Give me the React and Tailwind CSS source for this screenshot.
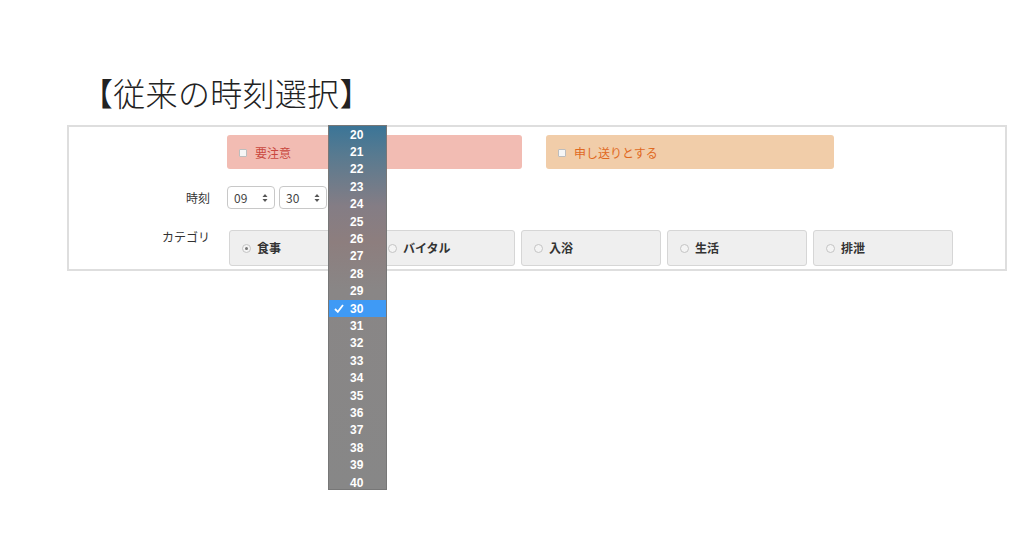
const MINUTES = Array.from({ length: 21 }, (_, i) => String(20 + i))
const CATEGORIES = ['食事', 'バイタル', '入浴', '生活', '排泄']

function Radio({ checked }) {
  return (
    <span className="w-[9px] h-[9px] rounded-full border border-[#c4c4c4] bg-[#f4f4f4] flex items-center justify-center">
      {checked && <span className="w-[3px] h-[3px] rounded-full bg-[#777]" />}
    </span>
  )
}

function Check() {
  return <span className="w-[8px] h-[8px] rounded-[1px] border border-[#bdbdbd] bg-[#f6f6f6]" />
}

function Select({ value }) {
  return (
    <div className="w-[48px] h-[23px] rounded-[4px] border border-[#c8c8c8] bg-white flex items-center justify-between px-[6px] text-[12px] text-[#444]">
      <span>{value}</span>
      <svg width="6" height="10" viewBox="0 0 6 10">
        <path d="M0.5 4 L3 1 L5.5 4 Z" fill="#555" />
        <path d="M0.5 6 L3 9 L5.5 6 Z" fill="#555" />
      </svg>
    </div>
  )
}

export default function App() {
  return (
    <div className="w-[1024px] h-[539px] bg-white relative overflow-hidden" style={{ fontFamily: '"Noto Sans CJK JP", "Noto Sans", sans-serif' }}>
      <div className="pt-[72px] pl-[81px]">
        <h1 className="text-[32px] leading-[40px] font-light text-[#222] tracking-[0.3px]">【従来の時刻選択】</h1>
      </div>

      {/* form panel */}
      <div className="ml-[67px] mt-[13px] w-[940px] h-[146px] border-2 border-[#dedede] pt-[8px]">
        <div className="flex pl-[158px] gap-[24px]">
          <div className="w-[295px] h-[34px] rounded-[3px] bg-[#f2bcb3] flex items-center gap-[8px] pl-[12px] pt-[2px] text-[12px] text-[#c9473e]">
            <Check />
            <span>要注意</span>
          </div>
          <div className="w-[288px] h-[34px] rounded-[3px] bg-[#f1cda9] flex items-center gap-[8px] pl-[12px] pt-[2px] text-[12px] text-[#e0691f]">
            <Check />
            <span>申し送りとする</span>
          </div>
        </div>

        <div className="flex items-center mt-[17px]">
          <div className="w-[141px] text-right text-[12px] text-[#333]">時刻</div>
          <div className="flex gap-[4px] ml-[17px]">
            <Select value="09" />
            <Select value="30" />
          </div>
        </div>

        <div className="flex mt-[18px]">
          <div className="w-[141px] text-right text-[12px] text-[#333] pt-[1px]">カテゴリ</div>
          <div className="flex gap-[6px] ml-[19px] mt-[3px]">
            {CATEGORIES.map((c, i) => (
              <div key={c} className="w-[140px] h-[36px] rounded-[3px] border border-[#d6d6d6] bg-[#efefef] flex items-center gap-[6px] pl-[12px] text-[12px] font-semibold text-[#333]">
                <Radio checked={i === 0} />
                <span>{c}</span>
              </div>
            ))}
          </div>
        </div>
      </div>

      {/* open minute dropdown */}
      <div
        className="absolute left-[328px] top-[125px] w-[59px] h-[365px] border border-[#777]"
        style={{ background: 'linear-gradient(180deg, #3b7597 0%, #587a90 8%, #847d85 22%, #8d7e7e 32%, #898686 45%, #878787 100%)', fontFamily: '"Liberation Sans", Arial, sans-serif' }}
      >
        {MINUTES.map(m => (
          <div
            key={m}
            className={`h-[17.4px] flex items-center text-[12px] font-bold text-white relative ${m === '30' ? 'bg-[#3f9af5]' : ''}`}
          >
            {m === '30' && (
              <svg className="absolute left-[5px]" width="10" height="9" viewBox="0 0 10 9">
                <path d="M1 5 L3.8 7.8 L9 1" stroke="white" strokeWidth="1.8" fill="none" />
              </svg>
            )}
            <span className="ml-[21px]">{m}</span>
          </div>
        ))}
      </div>
    </div>
  )
}
